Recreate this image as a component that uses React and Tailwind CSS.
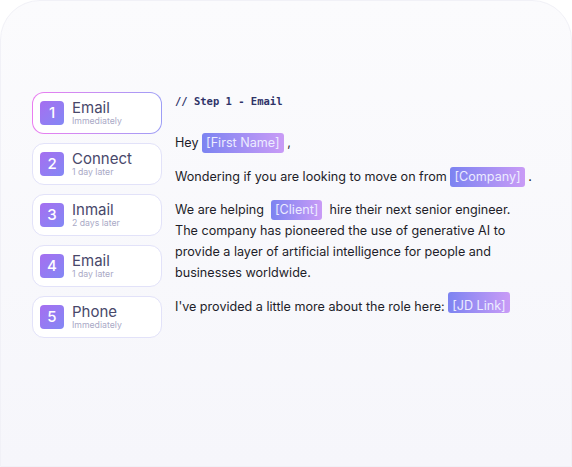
import React from "react";

const steps = [
  { n: 1, title: "Email", sub: "Immediately", active: true },
  { n: 2, title: "Connect", sub: "1 day later" },
  { n: 3, title: "Inmail", sub: "2 days later" },
  { n: 4, title: "Email", sub: "1 day later" },
  { n: 5, title: "Phone", sub: "Immediately" },
];

function Tag({ children, className = "" }) {
  return (
    <span
      className={`inline-block rounded-[3px] bg-gradient-to-r from-[#7c83f1] to-[#c99bf6] px-[4px] leading-[20px] text-[#ececff] ${className}`}
    >
      {children}
    </span>
  );
}

function StepBody({ step }) {
  return (
    <>
      <div className="flex h-6 w-6 items-center justify-center rounded-[4px] bg-gradient-to-br from-[#a56ef0] to-[#8287f5] text-[15px] font-medium text-white">
        {step.n}
      </div>
      <div className="flex flex-col">
        <span className="text-[15px] leading-[16px] text-[#48486a]">{step.title}</span>
        <span className="text-[8.7px] leading-[10px] text-[#a9a9c6]">{step.sub}</span>
      </div>
    </>
  );
}

function StepCard({ step }) {
  if (step.active) {
    return (
      <div className="h-[42px] w-[130px] rounded-[12px] bg-gradient-to-r from-[#ea7cf0] to-[#9d9ef6] p-px">
        <div className="flex h-full items-center gap-2 rounded-[11px] bg-white pl-[7px]">
          <StepBody step={step} />
        </div>
      </div>
    );
  }
  return (
    <div className="h-[42px] w-[130px] rounded-[12px] border border-[#e2e2f9] bg-white">
      <div className="flex h-full items-center gap-2 pl-[7px]">
        <StepBody step={step} />
      </div>
    </div>
  );
}

export default function App() {
  return (
    <div
      className="h-[467px] w-[572px] overflow-hidden bg-white"
      style={{ fontFamily: "Inter, 'Noto Sans', sans-serif" }}
    >
      <div className="h-full w-full rounded-t-[40px] border border-[#f1f1f7] bg-gradient-to-b from-[#fbfbfd] to-[#f6f6fb] pl-[31px] pt-[91px]">
        <div className="flex gap-[13px]">
          <div className="flex flex-col gap-[9px]">
            {steps.map((s) => (
              <StepCard key={s.n} step={s} />
            ))}
          </div>
          <div className="w-[380px] text-[12.6px] leading-[21px] text-[#1e1e2a]">
            <div
              className="pt-[2px] text-[10.5px] font-bold leading-[14px] text-[#2f3368]"
              style={{ fontFamily: "'DejaVu Sans Mono', 'Liberation Mono', monospace" }}
            >
              // Step 1 - Email
            </div>
            <p className="mt-[24px]">
              Hey <Tag>[First Name]</Tag> ,
            </p>
            <p className="mt-[13px]">
              Wondering if you are looking to move on from <Tag>[Company]</Tag> .
            </p>
            <p className="mt-[12px]">
              We are helping&nbsp; <Tag>[Client]</Tag>&nbsp; hire their next senior engineer.
              <br />
              The company has pioneered the use of generative AI to
              <br />
              provide a layer of artificial intelligence for people and
              <br />
              businesses worldwide.
            </p>
            <p className="mt-[13px]">
              I've provided a little more about the role here:{" "}
              <Tag className="relative -top-[4px] h-[21px] overflow-hidden align-top">
                <span className="relative top-[4px]">[JD Link]</span>
              </Tag>
            </p>
          </div>
        </div>
      </div>
    </div>
  );
}
